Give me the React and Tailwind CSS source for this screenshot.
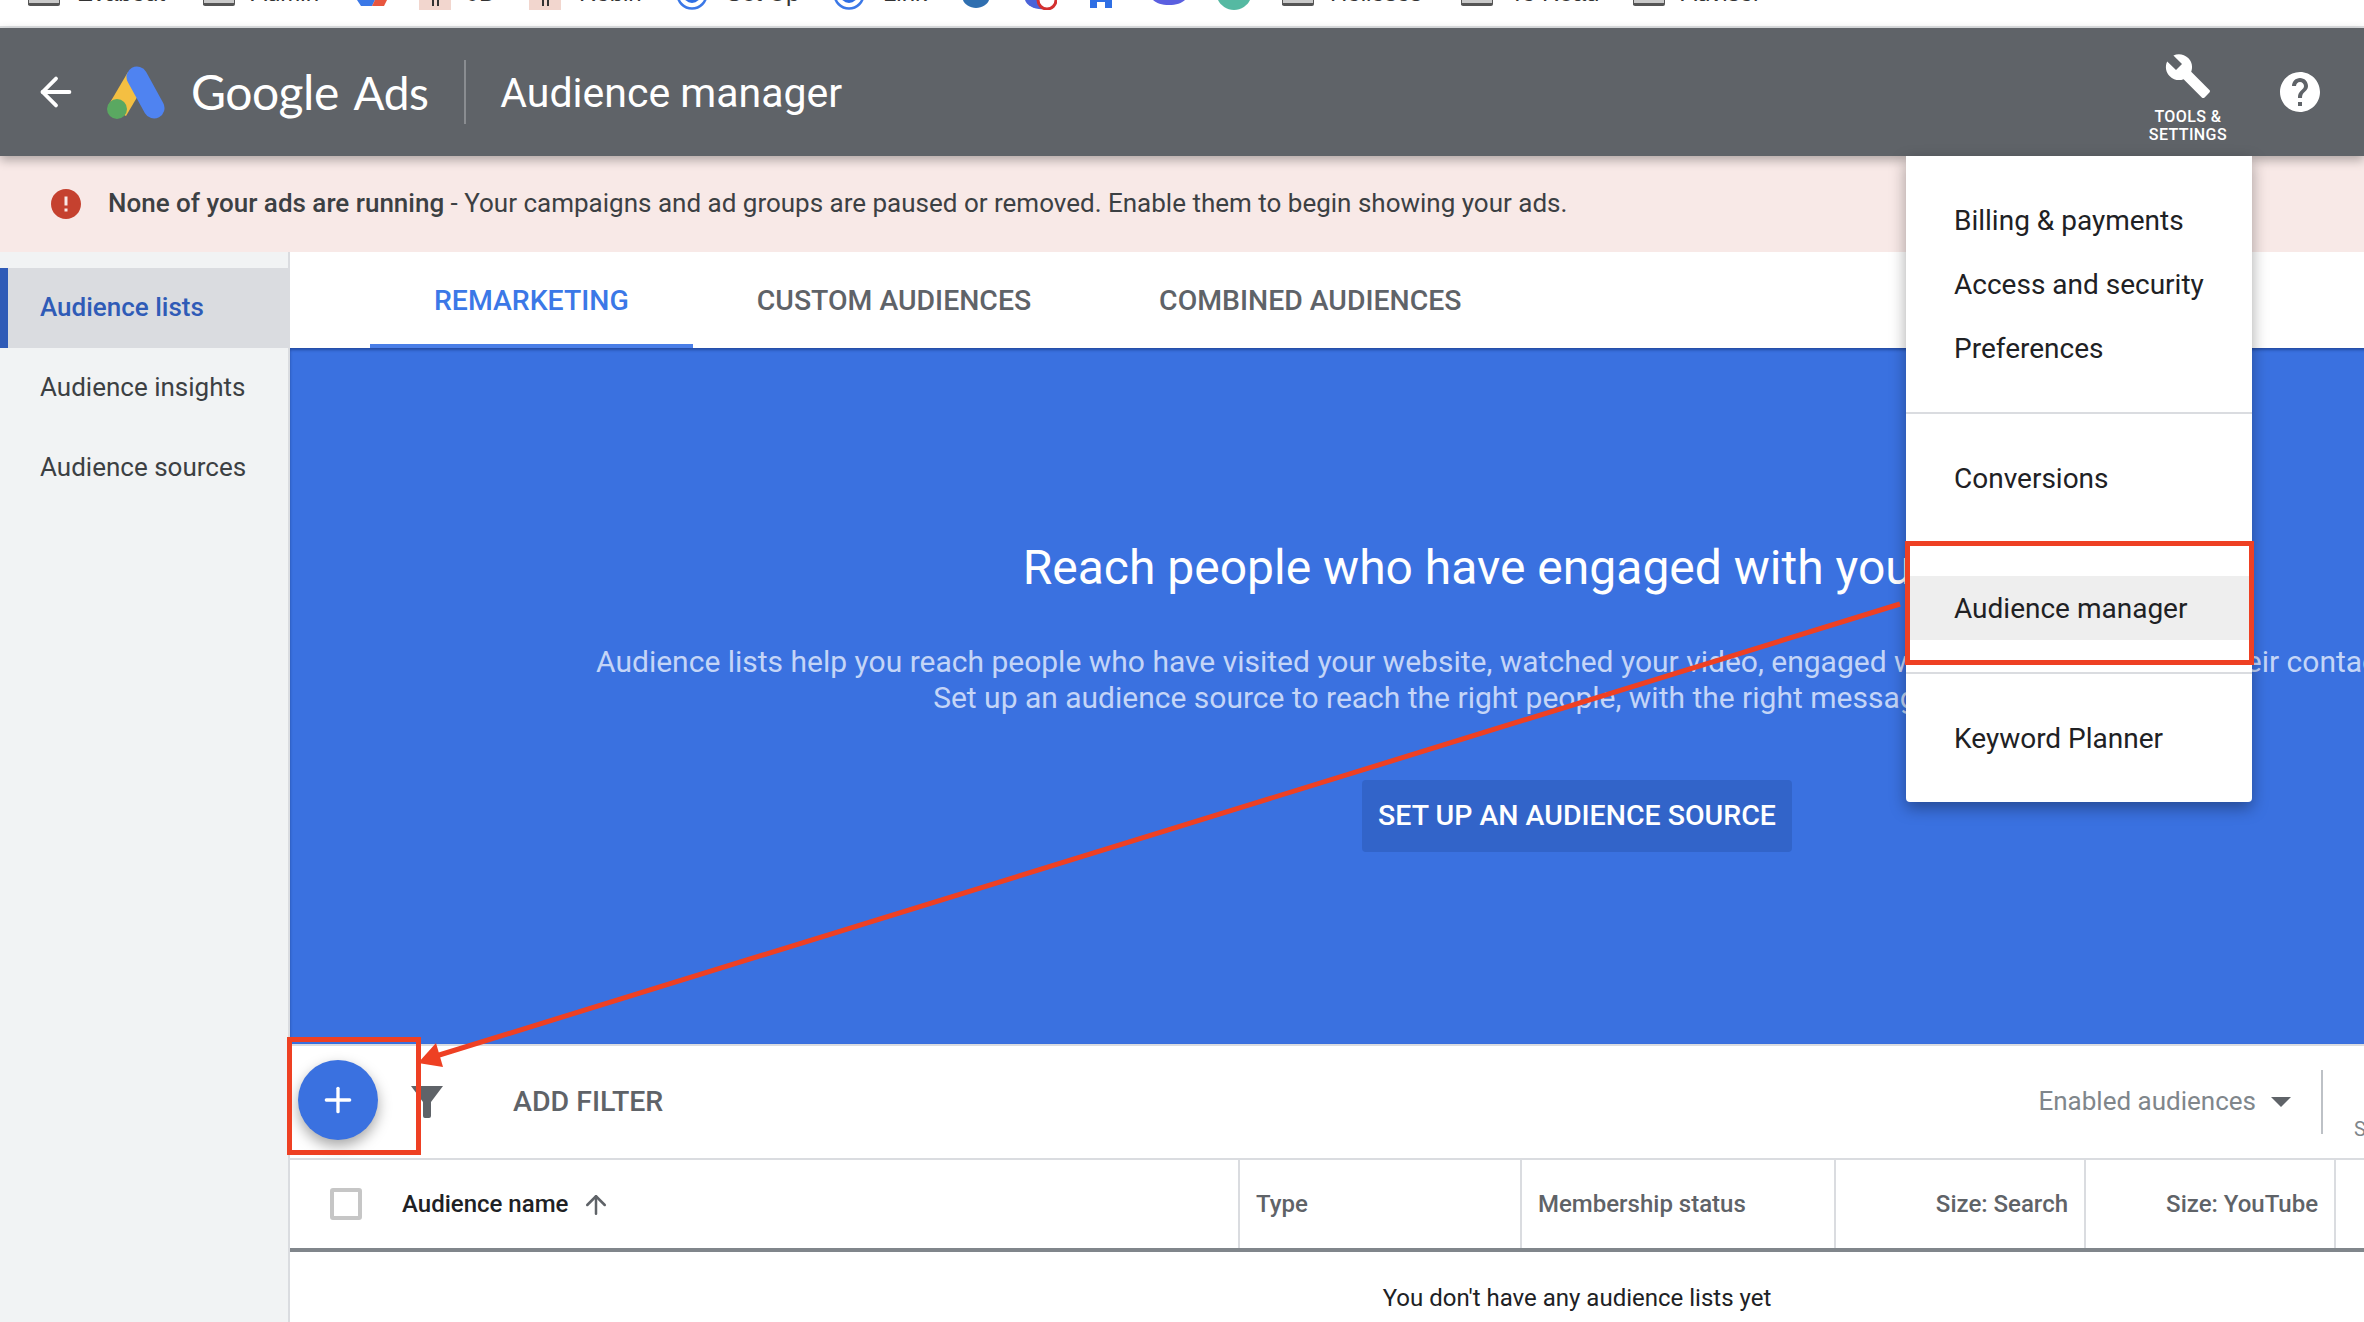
import { ArrowLeft, Plus, ArrowUp } from 'lucide-react'

const FolderIcon = ({ className }) => (
  <div className={`h-[6px] w-[32px] shrink-0 rounded-b-[2px] border-b-[3px] border-x border-[#555] bg-[#c9c9c9] ${className}`} />
)

const BookmarkText = ({ children, className }) => (
  <span className={`-mt-[21px] shrink-0 text-[24px] leading-[28px] text-[#333] ${className}`}>{children}</span>
)

const PinkIcon = ({ className }) => (
  <div className={`flex h-[10px] w-[32px] shrink-0 items-start justify-center gap-[3px] bg-[#f2d6ce] ${className}`}>
    <span className="h-[6px] w-[2px] bg-[#333]" />
    <span className="h-[6px] w-[2px] bg-[#333]" />
  </div>
)

const RingIcon = ({ className }) => (
  <svg width="32" height="10" viewBox="0 0 32 10" className={`shrink-0 ${className}`}>
    <circle cx="16" cy="-6" r="14.5" fill="none" stroke="#3b78e7" strokeWidth="2.5" />
    <circle cx="16" cy="-6" r="9" fill="#2f6fe4" />
  </svg>
)

const BookmarksBar = () => (
  <div className="flex h-[26px] shrink-0 items-start overflow-hidden bg-white font-['Liberation_Sans',sans-serif]">
    <FolderIcon className="ml-[28px]" />
    <BookmarkText className="ml-[17px] w-[93px]">Evabout</BookmarkText>
    <FolderIcon className="ml-[33px]" />
    <BookmarkText className="ml-[16px] w-[70px]">Admin</BookmarkText>
    <svg width="30" height="6" viewBox="0 0 30 6" className="ml-[36px] shrink-0">
      <path d="M0 0h18l-3 6H4z" fill="#3b78e7" />
      <path d="M18 0h12l-3 6H15z" fill="#e8563f" />
    </svg>
    <PinkIcon className="ml-[32px]" />
    <BookmarkText className="ml-[16px] w-[28px]">JD</BookmarkText>
    <PinkIcon className="ml-[34px]" />
    <BookmarkText className="ml-[18px] w-[64px]">Robin</BookmarkText>
    <RingIcon className="ml-[33px]" />
    <BookmarkText className="ml-[18px] w-[74px]">Set Up</BookmarkText>
    <RingIcon className="ml-[33px]" />
    <BookmarkText className="ml-[18px] w-[46px]">Link</BookmarkText>
    <svg width="26" height="8" viewBox="0 0 26 8" className="ml-[34px] shrink-0">
      <path d="M0 0h26c-1 4-7 8-13 8S1 4 0 0z" fill="#2f6fb0" />
    </svg>
    <svg width="32" height="10" viewBox="0 0 32 10" className="ml-[36px] shrink-0">
      <path d="M0 0h20v9c-10 1-18-3-20-9z" fill="#4a63d8" />
      <circle cx="22" cy="0" r="9" fill="#fff" stroke="#d3302f" strokeWidth="3" />
    </svg>
    <svg width="22" height="8" viewBox="0 0 22 8" className="ml-[33px] shrink-0">
      <path d="M0 0h22v8h-7V2H7v6H0z" fill="#2f6fe4" />
    </svg>
    <svg width="32" height="5" viewBox="0 0 32 5" className="ml-[41px] shrink-0">
      <path d="M0 0h32c-3 3-9 5-16 5S3 3 0 0z" fill="#5a5fe0" />
    </svg>
    <svg width="32" height="10" viewBox="0 0 32 10" className="ml-[33px] shrink-0">
      <path d="M0 0h32c-2 5-9 10-16 10S2 5 0 0z" fill="#55b9a2" />
    </svg>
    <FolderIcon className="ml-[32px]" />
    <BookmarkText className="ml-[16px] w-[100px]">Hollosos</BookmarkText>
    <FolderIcon className="ml-[31px]" />
    <BookmarkText className="ml-[17px] w-[90px]">To Read</BookmarkText>
    <FolderIcon className="ml-[33px]" />
    <BookmarkText className="ml-[16px] w-[84px]">Advisor</BookmarkText>
  </div>
)

const Header = () => (
  <div className="relative z-20 flex h-[128px] shrink-0 items-center bg-[#5f6368] text-white shadow-[0_4px_10px_rgba(0,0,0,0.3)]">
    <ArrowLeft size={46} strokeWidth={2} className="ml-[33px] shrink-0" />
    <svg width="58" height="53" viewBox="0 0 58 53" className="ml-[28px] shrink-0">
      <path d="M21 6 L1 40 L19 50 L39 16 Z" fill="#f4bf42" />
      <line x1="30" y1="11" x2="47" y2="42" stroke="#4f83f1" strokeWidth="21" strokeLinecap="round" />
      <circle cx="10" cy="43" r="10" fill="#5aa861" />
    </svg>
    <span className="ml-[26px] font-['Lato',sans-serif] text-[48px] leading-none tracking-[-0.5px]">
      Google <span className="ml-[3px] text-[46px]">Ads</span>
    </span>
    <div className="ml-[36px] h-[64px] w-[2px] bg-[#8a8d91]" />
    <span className="ml-[34px] pt-[2px] font-['Roboto',sans-serif] text-[41px] leading-none">Audience manager</span>
    <div className="ml-auto mr-[49px] flex flex-col items-center pt-[12px]">
      <svg width="48" height="48" viewBox="0 0 24 24" fill="#fff">
        <path d="M22.7 19l-9.1-9.1c.9-2.3.4-5-1.5-6.9-2-2-5-2.4-7.4-1.3L9 6 6 9 1.6 4.7C.4 7.1.9 10.1 2.9 12.1c1.9 1.9 4.6 2.4 6.9 1.5l9.1 9.1c.4.4 1 .4 1.4 0l2.3-2.3c.5-.4.5-1.1.1-1.4z" />
      </svg>
      <div className="mt-[8px] text-center font-['Roboto',sans-serif] text-[16px] font-medium leading-[18px] tracking-[0.4px]">
        TOOLS &amp;<br />SETTINGS
      </div>
    </div>
    <svg width="48" height="48" viewBox="0 0 24 24" fill="#fff" className="mr-[40px] shrink-0">
      <path d="M12 2C6.48 2 2 6.48 2 12s4.48 10 10 10 10-4.48 10-10S17.52 2 12 2zm1 17h-2v-2h2v2zm2.07-7.75l-.9.92C13.45 12.9 13 13.5 13 15h-2v-.5c0-1.1.45-2.1 1.17-2.83l1.24-1.26c.37-.36.59-.86.59-1.41 0-1.1-.9-2-2-2s-2 .9-2 2H8c0-2.21 1.79-4 4-4s4 1.79 4 4c0 .88-.36 1.68-.93 2.25z" />
    </svg>
  </div>
)

const Banner = () => (
  <div className="flex h-[96px] shrink-0 items-center bg-[#f8e9e7] font-['Roboto',sans-serif] text-[26px] text-[#3c4043]">
    <svg width="36" height="36" viewBox="0 0 24 24" fill="#c5412f" className="ml-[48px] shrink-0">
      <path d="M12 2C6.48 2 2 6.48 2 12s4.48 10 10 10 10-4.48 10-10S17.52 2 12 2zm1 15h-2v-2h2v2zm0-4h-2V7h2v6z" />
    </svg>
    <span className="ml-[24px] -mt-[2px]">
      <span className="font-medium">None of your ads are running</span> - Your campaigns and ad groups are paused or removed. Enable them to begin showing your ads.
    </span>
  </div>
)

const Sidebar = () => (
  <div className="w-[290px] shrink-0 border-r-2 border-[#dadce0] bg-[#f1f3f4] pt-[16px] font-['Roboto',sans-serif] text-[26px] text-[#3c4043]">
    <div className="flex h-[80px] items-center border-l-[8px] border-[#2f5bb7] bg-[#dadce0] pb-[1px] pl-[32px] font-medium text-[#2f5bb7]">Audience lists</div>
    <div className="flex h-[80px] items-center pb-[1px] pl-[40px]">Audience insights</div>
    <div className="flex h-[80px] items-center pb-[1px] pl-[40px]">Audience sources</div>
  </div>
)

const tabs = [
  { label: 'REMARKETING', active: true },
  { label: 'CUSTOM AUDIENCES' },
  { label: 'COMBINED AUDIENCES' },
]

const Tabs = () => (
  <div className="flex h-[96px] shrink-0 bg-white pl-[80px] font-['Roboto',sans-serif] text-[28.4px] font-medium">
    {tabs.map(t => (
      <div
        key={t.label}
        className={`flex items-center border-b-4 px-[64px] pt-[6px] ${t.active ? 'border-[#4a7fe8] text-[#3b78e7]' : 'border-transparent text-[#5f6368]'}`}
      >
        {t.label}
      </div>
    ))}
  </div>
)

const Hero = () => (
  <div className="flex h-[696px] shrink-0 flex-col items-center bg-[#3a71e0] pt-[188px] font-['Roboto',sans-serif] shadow-[inset_0_2px_3px_rgba(20,50,120,0.6)]">
    <h1 className="text-[48px] font-normal leading-[64px] text-white">Reach people who have engaged with your business</h1>
    <p className="mt-[44px] text-center text-[30px] leading-[36px] text-[#c4d5f7]">
      Audience lists help you reach people who have visited your website, watched your video, engaged with your app, or shared their contact information.
      <br />
      Set up an audience source to reach the right people, with the right message, at just the right time.
    </p>
    <button className="mt-[64px] flex h-[72px] w-[430px] items-center justify-center rounded-[4px] bg-[#3264c9] pt-[1px] text-[28.5px] font-medium text-white">
      SET UP AN AUDIENCE SOURCE
    </button>
  </div>
)

const FilterRow = () => (
  <div className="flex h-[116px] w-[2074px] shrink-0 items-center overflow-hidden border-y-2 border-[#dadce0] bg-white font-['Roboto',sans-serif]">
    <button className="ml-[8px] flex h-[80px] w-[80px] shrink-0 -translate-y-[2px] items-center justify-center rounded-full bg-[#3a71e0] shadow-[0_6px_14px_rgba(0,0,0,0.35)]">
      <Plus size={40} strokeWidth={2} className="text-white" />
    </button>
    <svg width="32" height="32" viewBox="0 0 32 32" fill="#5f6368" className="ml-[33px] shrink-0">
      <path d="M0 0h32L20 16v14a2 2 0 0 1-2 2h-4a2 2 0 0 1-2-2V16z" />
    </svg>
    <span className="ml-[70px] pt-[1px] text-[28.5px] font-medium text-[#5f6368]">ADD FILTER</span>
    <span className="ml-auto pb-[2px] text-[26px] text-[#80868b]">Enabled audiences</span>
    <div className="ml-[15px] h-0 w-0 shrink-0 border-x-[10px] border-t-[10px] border-x-transparent border-t-[#5f6368]" />
    <div className="ml-[30px] h-[64px] w-[2px] shrink-0 self-center bg-[#bdc1c6]" />
    <span className="ml-[31px] w-[10px] shrink-0 self-end pb-[14px] text-[20px] text-[#80868b]">S</span>
  </div>
)

const TableHead = () => (
  <div className="flex h-[92px] w-[2074px] shrink-0 border-b-4 border-[#80868b] bg-white font-['Roboto',sans-serif] text-[24px] font-medium text-[#5f6368]">
    <div className="flex w-[950px] shrink-0 items-center border-r-2 border-[#dadce0]">
      <div className="ml-[40px] h-[32px] w-[32px] shrink-0 rounded-[3px] border-[4px] border-[#c6c6c6]" />
      <span className="ml-[40px] text-[#202124]">Audience name</span>
      <ArrowUp size={30} strokeWidth={2} className="ml-[13px] mt-[2px] text-[#5f6368]" />
    </div>
    <div className="flex w-[282px] shrink-0 items-center border-r-2 border-[#dadce0] pl-[16px]">Type</div>
    <div className="flex w-[314px] shrink-0 items-center border-r-2 border-[#dadce0] pl-[16px]">Membership status</div>
    <div className="flex w-[250px] shrink-0 items-center justify-end border-r-2 border-[#dadce0] pr-[16px]">Size: Search</div>
    <div className="flex w-[250px] shrink-0 items-center justify-end border-r-2 border-[#dadce0] pr-[16px]">Size: YouTube</div>
  </div>
)

const menuGroups = [
  ['Billing & payments', 'Access and security', 'Preferences'],
  ['Conversions'],
  ['Audience manager'],
  ['Keyword Planner'],
]

const ToolsMenu = () => (
  <div className="absolute left-[1906px] top-[156px] z-30 w-[346px] divide-y-2 divide-[#dadce0] rounded-b-[4px] bg-white font-['Roboto',sans-serif] text-[28px] text-[#202124] shadow-[0_6px_16px_rgba(0,0,0,0.35)]">
    {menuGroups.map(group => (
      <div key={group[0]} className="py-[32px]">
        {group.map(item => (
          <div key={item} className={`flex h-[64px] items-center pl-[48px] pt-[2px] ${item === 'Audience manager' ? 'bg-[#eeeeee]' : ''}`}>
            {item}
          </div>
        ))}
      </div>
    ))}
  </div>
)

export default function App() {
  return (
    <div className="relative flex h-[1322px] w-[2364px] flex-col overflow-hidden bg-white">
      <BookmarksBar />
      <div className="h-[2px] shrink-0 bg-[#dfe1e3]" />
      <Header />
      <Banner />
      <div className="flex min-h-0 flex-1">
        <Sidebar />
        <div className="min-w-0 flex-1 overflow-hidden">
          <div className="flex w-[2574px] flex-col">
            <Tabs />
            <Hero />
            <FilterRow />
            <TableHead />
            <div className="mt-[32px] text-center font-['Roboto',sans-serif] text-[24px] leading-[28px] text-[#202124]">You don't have any audience lists yet</div>
          </div>
        </div>
      </div>
      <ToolsMenu />
      {/* red annotation boxes and arrow on top of the screenshot */}
      <div className="absolute left-[1905px] top-[541px] z-40 h-[124px] w-[349px] border-[5px] border-[#ee4023]" />
      <div className="absolute left-[287px] top-[1037px] z-40 h-[118px] w-[134px] border-[5px] border-[#ee4023]" />
      <svg width="2364" height="1322" className="pointer-events-none absolute left-0 top-0 z-40">
        <line x1="1900" y1="604" x2="436" y2="1056" stroke="#ee4023" strokeWidth="5" />
        <polygon points="418,1063 436,1043 443,1067" fill="#ee4023" />
      </svg>
    </div>
  )
}
